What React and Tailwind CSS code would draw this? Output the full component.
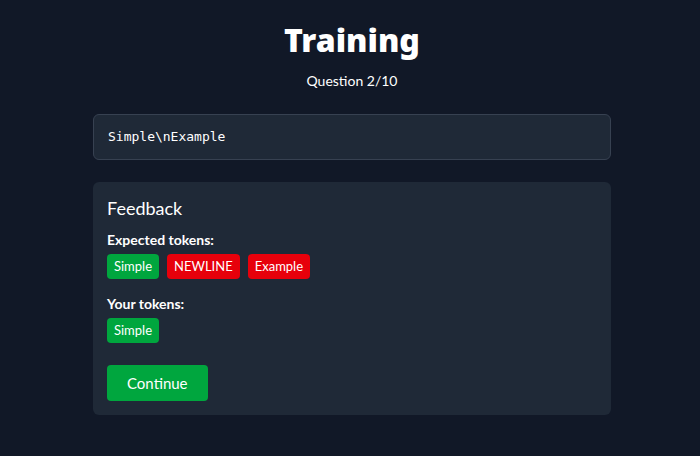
import React from 'react';

const expected = [
  { text: 'Simple', ok: true },
  { text: 'NEWLINE', ok: false },
  { text: 'Example', ok: false },
];
const mine = [{ text: 'Simple', ok: true }];

function Token({ text, ok }) {
  return (
    <span
      className={`inline-flex items-center h-[25px] px-[7px] rounded text-[13px] text-white ${
        ok ? 'bg-[#00a63e]' : 'bg-[#e7000b]'
      }`}
    >
      {text}
    </span>
  );
}

export default function App() {
  return (
    <div
      className="min-h-screen bg-[#111827] text-white pl-[4px]"
      style={{ fontFamily: 'Lato, "Noto Sans", sans-serif' }}
    >
      <div className="w-[518px] mx-auto pt-[20px]">
        <h1
          className="text-center text-[32px] font-black leading-[40px]"
          style={{ fontFamily: '"Noto Sans", sans-serif' }}
        >
          Training
        </h1>
        <p className="text-center text-[14px] mt-[11px] leading-5">Question 2/10</p>

        <div className="mt-[23px] bg-[#1f2937] border border-[#374151] rounded-md px-[14px] py-[12px]">
          <div className="text-[13px] leading-5" style={{ fontFamily: '"DejaVu Sans Mono", monospace' }}>
            Simple\nExample
          </div>
        </div>

        <div className="mt-[22px] bg-[#1f2937] rounded-md px-[14px] pt-[12px] pb-[14px]">
          <h2 className="text-[18px] leading-7">Feedback</h2>
          <p className="mt-[8px] text-[14px] font-bold leading-5">Expected tokens:</p>
          <div className="mt-[4px] flex gap-2">
            {expected.map((t, i) => (
              <Token key={i} {...t} />
            ))}
          </div>
          <p className="mt-[15px] text-[14px] font-bold leading-5">Your tokens:</p>
          <div className="mt-[4px] flex gap-2">
            {mine.map((t, i) => (
              <Token key={i} {...t} />
            ))}
          </div>
          <button className="mt-[22px] bg-[#00a63e] rounded px-5 h-[36px] text-[15px] text-white">
            Continue
          </button>
        </div>
      </div>
    </div>
  );
}
